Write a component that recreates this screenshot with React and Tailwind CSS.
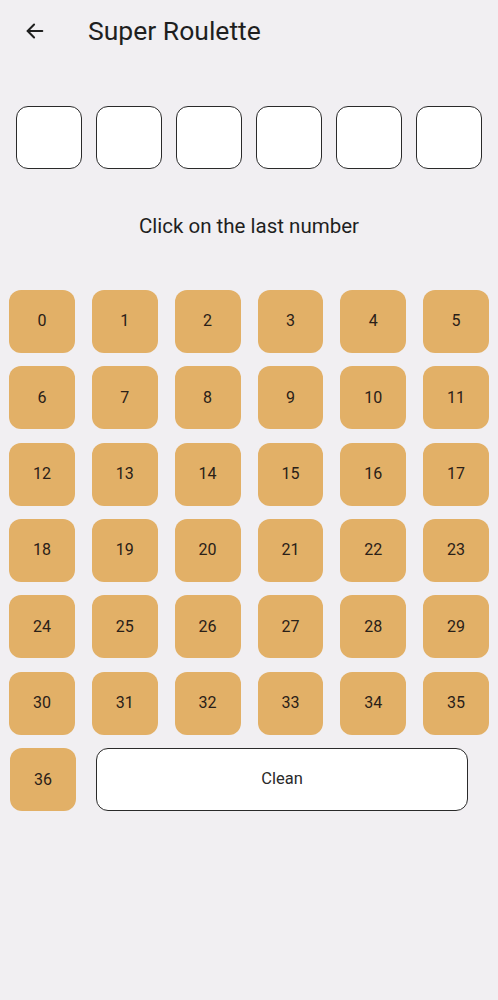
import { useState } from 'react';

const numbers = Array.from({ length: 36 }, (_, i) => i);

const BackArrow = () => (
  <svg width="22" height="22" viewBox="0 0 24 24" fill="none" stroke="#1f1f1f" strokeWidth="2.2" strokeLinecap="round" strokeLinejoin="round">
    <path d="M20 12H4" />
    <path d="M11 5l-7 7 7 7" />
  </svg>
);

const NumberButton = ({ n, onClick }) => (
  <button
    className="h-[63px] rounded-[12px] bg-[#e2b067] text-[16px] text-[#2a2018] flex items-center justify-center"
    onClick={() => onClick(n)}
  >
    {n}
  </button>
);

export default function App() {
  const [last, setLast] = useState([]);

  const pick = (n) => setLast(prev => [n, ...prev].slice(0, 6));

  return (
    <div className="min-h-[1000px] w-[498px] bg-[#f1eff2] text-[#1f1f1f]" style={{ fontFamily: 'Roboto, "Noto Sans", sans-serif' }}>
      {/* Top bar */}
      <div className="h-[62px] flex items-center pl-[24px]">
        <BackArrow />
        <h1 className="ml-[42px] text-[26.5px] text-[#1f1f1f]">Super Roulette</h1>
      </div>

      {/* Last numbers */}
      <div className="grid grid-cols-6 gap-x-[14px] px-[16px] mt-[44px]">
        {Array.from({ length: 6 }).map((_, i) => (
          <div key={i} className="h-[63px] rounded-[12px] bg-white border border-[#2a2a2a] flex items-center justify-center text-[18px]">
            {last[i] ?? ''}
          </div>
        ))}
      </div>

      <p className="text-center text-[20.5px] mt-[42px] text-[#1f1f1f]">Click on the last number</p>

      {/* Number grid */}
      <div className="grid grid-cols-6 gap-x-[17px] gap-y-[13.4px] px-[9px] mt-[48px]">
        {numbers.map(n => (
          <NumberButton key={n} n={n} onClick={pick} />
        ))}
      </div>

      <div className="flex gap-[20px] pl-[10px] mt-[13.4px]">
        <div className="w-[66px]">
          <button
            className="w-full h-[63px] rounded-[12px] bg-[#e2b067] text-[16px] text-[#2a2018] flex items-center justify-center"
            onClick={() => pick(36)}
          >
            36
          </button>
        </div>
        <button
          className="w-[372px] h-[63px] rounded-[12px] bg-white border border-[#2a2a2a] text-[16.5px] text-[#2a2a2a]"
          onClick={() => setLast([])}
        >
          Clean
        </button>
      </div>
    </div>
  );
}
